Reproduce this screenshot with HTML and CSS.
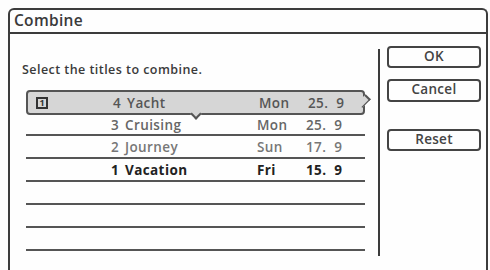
FILE: index.html
```html
<!DOCTYPE html>
<html>
<head>
<meta charset="utf-8">
<link rel="stylesheet" href="styles.css">
</head>
<body>
<div class="dialog">
  <div class="titlebar">Combine</div>
  <div class="content">
    <div class="left">
      <div class="prompt">Select the titles to combine.</div>
      <div class="list">
        <div class="row sel">
          <span class="c-icon"><span class="badge">1</span></span>
          <span class="c-num">4</span><span class="c-title">Yacht</span>
          <span class="c-day">Mon</span><span class="c-date">25.&nbsp; 9</span>
          <span class="tip-right"></span>
          <span class="tip-down"></span>
        </div>
        <div class="row r2">
          <span class="c-icon"></span>
          <span class="c-num">3</span><span class="c-title">Cruising</span>
          <span class="c-day">Mon</span><span class="c-date">25.&nbsp; 9</span>
        </div>
        <div class="row r3">
          <span class="c-icon"></span>
          <span class="c-num">2</span><span class="c-title">Journey</span>
          <span class="c-day">Sun</span><span class="c-date">17.&nbsp; 9</span>
        </div>
        <div class="row r4">
          <span class="c-icon"></span>
          <span class="c-num">1</span><span class="c-title">Vacation</span>
          <span class="c-day">Fri</span><span class="c-date">15.&nbsp; 9</span>
        </div>
        <div class="row"></div>
        <div class="row"></div>
        <div class="row"></div>
      </div>
    </div>
    <div class="right">
      <div class="btn btn-ok">OK</div>
      <div class="btn btn-cancel">Cancel</div>
      <div class="btn btn-reset">Reset</div>
    </div>
  </div>
</div>
</body>
</html>
```
FILE: styles.css
```css
html, body {
  margin: 0;
  padding: 0;
  background: #fdfdfd;
}
body {
  font-family: "Open Sans", "DejaVu Sans", sans-serif;
  color: #444;
  overflow: hidden;
  width: 490px;
  height: 270px;
}
.dialog {
  margin: 8px 0 0 8px;
  width: 476px;
  height: 260px;
  overflow: hidden;
  border: 2px solid #3c3c3c;
  border-bottom: none;
  border-radius: 6px 6px 0 0;
  background: #fefefe;
}
.titlebar {
  height: 22px;
  line-height: 20px;
  padding-left: 4px;
  font-size: 15.5px;
  font-weight: 600;
  letter-spacing: 0.3px;
  color: #3a3a3a;
  border-bottom: 2px solid #3c3c3c;
}
.content {
  display: flex;
}
.left {
  width: 368px;
}
.prompt {
  margin: 27px 0 0 12px;
  font-size: 12.5px;
  font-weight: 600;
  letter-spacing: 0.45px;
  color: #3a3a3a;
  height: 18px;
  line-height: 18px;
}
.list {
  margin: 11px 0 0 16px;
  width: 339px;
}
.row {
  position: relative;
  display: flex;
  align-items: center;
  height: 21px;
  border-bottom: 2px solid #555;
  font-size: 13.5px;
  font-weight: 600;
  letter-spacing: 0.4px;
  color: #555;
}
.row.sel {
  height: 21px;
  margin-bottom: -2px;
  border: 2px solid #555;
  border-radius: 4px;
  background: #d6d6d6;
  z-index: 1;
}
.row.r2 { color: #666; padding-top: 2px; height: 19px; }
.row.r3 { color: #777; }
.row.r4 { color: #222; font-weight: 700; }
.c-icon {
  width: 84px;
  padding-left: 10px;
  box-sizing: border-box;
  display: flex;
}
.row.sel .c-icon { padding-left: 8px; }
.badge {
  display: inline-block;
  width: 8px;
  height: 8px;
  border: 2px solid #333;
  font-size: 9px;
  line-height: 8px;
  letter-spacing: 0;
  text-align: center;
  font-weight: 700;
  color: #333;
}
.c-num {
  width: 9px;
  text-align: right;
}
.c-title {
  width: 132px;
  padding-left: 6px;
}
.c-day {
  width: 49px;
}
.c-date {
  width: 44px;
}
.tip-right {
  position: absolute;
  right: -7px;
  top: 3px;
  width: 10px;
  height: 10px;
  border-top: 2px solid #555;
  border-right: 2px solid #555;
  background: #d6d6d6;
  transform: rotate(45deg) scaleX(0.6);
}
.tip-down {
  position: absolute;
  left: 164px;
  bottom: -5px;
  width: 6px;
  height: 6px;
  border-bottom: 2px solid #555;
  border-right: 2px solid #555;
  background: #d6d6d6;
  transform: rotate(45deg);
}
.right {
  margin-top: 15px;
  height: 207px;
  border-left: 2px solid #3c3c3c;
  padding-left: 7px;
}
.btn {
  box-sizing: border-box;
  width: 94px;
  height: 22px;
  border: 2px solid #444;
  border-radius: 4px;
  text-align: center;
  font-size: 13.5px;
  font-weight: 600;
  letter-spacing: 0.3px;
  line-height: 16px;
  color: #444;
}
.btn-ok { margin-top: -3px; }
.btn-cancel { margin-top: 11px; height: 23px; }
.btn-reset { margin-top: 27px; }
```
